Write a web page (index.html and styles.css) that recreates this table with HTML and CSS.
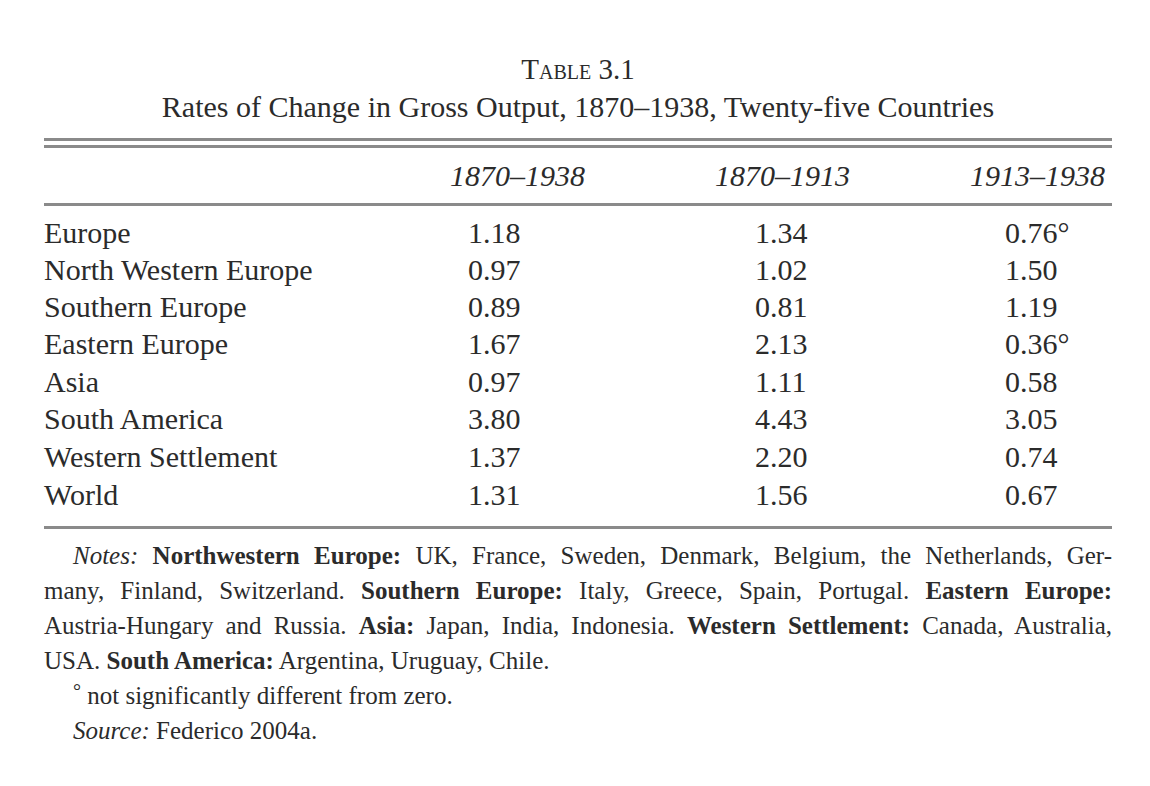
FILE: index.html
```html
<!DOCTYPE html>
<html>
<head>
<meta charset="utf-8">
<link rel="stylesheet" href="styles.css">
</head>
<body>
<div class="page">
  <div class="caption">
    <div class="label">Table 3.1</div>
    <div class="title">Rates of Change in Gross Output, 1870–1938, Twenty-five Countries</div>
  </div>
  <div class="double-rule"></div>
  <table class="data">
    <colgroup>
      <col class="col-name">
      <col class="col-1">
      <col class="col-2">
      <col class="col-3">
    </colgroup>
    <thead>
      <tr>
        <th class="name"></th>
        <th class="c1">1870–1938</th>
        <th class="c2">1870–1913</th>
        <th class="c3">1913–1938</th>
      </tr>
    </thead>
    <tbody>
      <tr class="first"><td class="name">Europe</td><td class="c1">1.18</td><td class="c2">1.34</td><td class="c3">0.76°</td></tr>
      <tr><td class="name">North Western Europe</td><td class="c1">0.97</td><td class="c2">1.02</td><td class="c3">1.50</td></tr>
      <tr><td class="name">Southern Europe</td><td class="c1">0.89</td><td class="c2">0.81</td><td class="c3">1.19</td></tr>
      <tr><td class="name">Eastern Europe</td><td class="c1">1.67</td><td class="c2">2.13</td><td class="c3">0.36°</td></tr>
      <tr><td class="name">Asia</td><td class="c1">0.97</td><td class="c2">1.11</td><td class="c3">0.58</td></tr>
      <tr><td class="name">South America</td><td class="c1">3.80</td><td class="c2">4.43</td><td class="c3">3.05</td></tr>
      <tr><td class="name">Western Settlement</td><td class="c1">1.37</td><td class="c2">2.20</td><td class="c3">0.74</td></tr>
      <tr class="last"><td class="name">World</td><td class="c1">1.31</td><td class="c2">1.56</td><td class="c3">0.67</td></tr>
    </tbody>
  </table>
  <div class="notes">
    <span class="line indent just"><i>Notes:</i> <b>Northwestern Europe:</b> UK, France, Sweden, Denmark, Belgium, the Netherlands, Ger-</span>
    <span class="line just">many, Finland, Switzerland. <b>Southern Europe:</b> Italy, Greece, Spain, Portugal. <b>Eastern Europe:</b></span>
    <span class="line just">Austria-Hungary and Russia. <b>Asia:</b> Japan, India, Indonesia. <b>Western Settlement:</b> Canada, Australia,</span>
    <span class="line">USA. <b>South America:</b> Argentina, Uruguay, Chile.</span>
    <span class="line indent"><sup class="deg">°</sup> not significantly different from zero.</span>
    <span class="line indent"><i>Source:</i> Federico 2004a.</span>
  </div>
</div>
</body>
</html>
```
FILE: styles.css
```css
html, body {
  margin: 0;
  padding: 0;
  background: #ffffff;
}
body {
  font-family: "Liberation Serif", "Times New Roman", serif;
  color: #2b2b2b;
}
.page {
  width: 1068px;
  margin-left: 44px;
  padding-top: 51px;
}
.caption {
  text-align: center;
}
.label {
  font-variant: small-caps;
  font-size: 29px;
  line-height: 37px;
}
.title {
  font-size: 30px;
  line-height: 37px;
  margin-bottom: 13px;
}
.double-rule {
  height: 4px;
  border-top: 3px solid #8a8a8a;
  border-bottom: 3px solid #8a8a8a;
}
.data {
  width: 1068px;
  table-layout: fixed;
  border-collapse: collapse;
  font-size: 30px;
}
.col-name { width: 396px; }
.col-1 { width: 260px; }
.col-2 { width: 260px; }
.col-3 { width: 152px; }
.data th,
.data td {
  box-sizing: border-box;
  padding: 0;
  text-align: left;
  white-space: nowrap;
}
.data th {
  font-style: italic;
  font-weight: normal;
  height: 56px;
  vertical-align: middle;
  border-bottom: 3px solid #8a8a8a;
  padding-top: 2px;
}
.data td {
  height: 37.4px;
  line-height: 37px;
}
.data tr.first td { padding-top: 8px; height: 45.4px; }
.data tr.last td {
  padding-bottom: 12px;
  height: 52.4px;
  border-bottom: 3px solid #8a8a8a;
}
.data th.c1 { padding-left: 10px; }
.data th.c2 { padding-left: 15px; }
.data th.c3 { padding-left: 10px; }
.data td.c1 { padding-left: 28px; }
.data td.c2 { padding-left: 55px; }
.data td.c3 { padding-left: 45px; }
.notes {
  font-size: 25px;
  line-height: 35px;
  padding-top: 9px;
}
.line {
  display: block;
  white-space: nowrap;
}
.line.just {
  text-align: justify;
  text-align-last: justify;
}
.line.indent {
  padding-left: 29px;
}
.line b { font-weight: bold; }
.deg {
  font-size: 20px;
  vertical-align: 6px;
  line-height: 0;
}
```
